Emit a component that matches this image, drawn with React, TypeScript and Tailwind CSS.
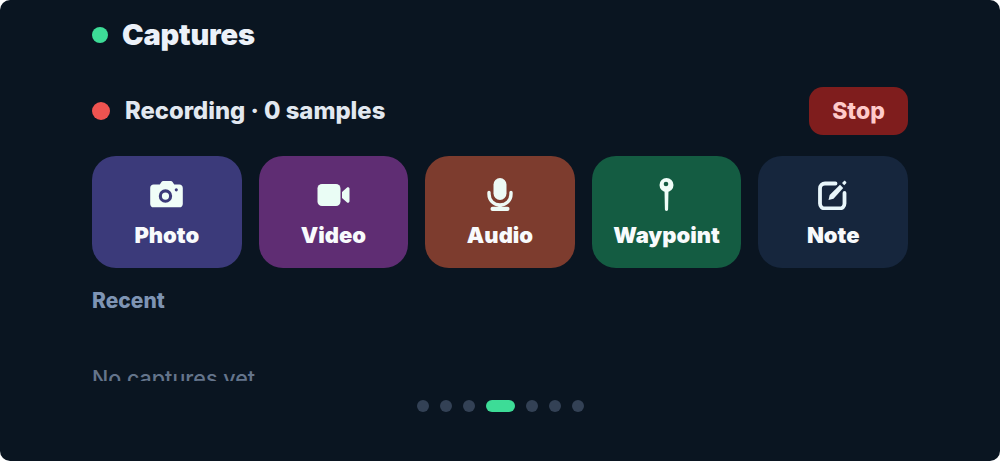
import React from "react";

const CameraIcon = ({ hole }: { hole: string }) => (
	<svg width="33" height="27" viewBox="0 0 32 26">
		<path
			d="M3.5 3.5h6l1.6-2.4c.4-.6 1-.9 1.700-.9h7.400c.7 0 1.300.3 1.700.9l1.600 2.400h5c1.900 0 3.300 1.400 3.300 3.300v15.500c0 1.900-1.400 3.300-3.300 3.300h-25c-1.900 0-3.300-1.400-3.300-3.300V6.800c0-1.900 1.400-3.300 3.300-3.300z"
			fill="#f0fdf8"
			transform="translate(0 -0.2)"
		/>
		<circle cx="15" cy="14.500" r="5" fill="none" stroke={hole} strokeWidth="3" />
		<circle cx="25.500" cy="8.500" r="1.500" fill={hole} />
	</svg>
);

const VideoIcon = () => (
	<svg width="33" height="22" viewBox="0 0 32 22">
		<rect x="0" y="0" width="23" height="22" rx="4.500" fill="#eafdf5" />
		<path d="M24.500 8l4.800-4.200c1-1 2.700-.4 2.700 1v12.400c0 1.400-1.700 2-2.700 1L24.500 14z" fill="#eafdf5" />
	</svg>
);

const MicIcon = () => (
	<svg width="26" height="33" viewBox="0 0 26 33">
		<rect x="6.500" y="0" width="13" height="22" rx="6.500" fill="#edfaf5" />
		<path d="M2 14.500v1.500c0 6.300 4.700 11 11 11s11-4.700 11-11v-1.500" fill="none" stroke="#edfaf5" strokeWidth="3.400" strokeLinecap="round" />
		<path d="M13 26v5" stroke="#edfaf5" strokeWidth="3.400" />
		<rect x="3.500" y="28.800" width="19" height="4.200" rx="2" fill="#edfaf5" />
	</svg>
);

const PinIcon = ({ hole }: { hole: string }) => (
	<svg width="15" height="33" viewBox="0 0 15 33">
		<path d="M5.500 12h4l-.4 19.300c0 1-.7 1.700-1.600 1.700s-1.600-.7-1.600-1.700z" fill="#f0fdf8" />
		<circle cx="7.500" cy="7" r="7" fill="#f0fdf8" />
		<circle cx="7" cy="6" r="2.300" fill={hole} />
	</svg>
);

const NoteIcon = () => (
	<svg width="30" height="31" viewBox="0 0 30 31">
		<path
			d="M17.500 4.500H7a5 5 0 0 0-5 5v15a5 5 0 0 0 5 5h14.500a5 5 0 0 0 5-5V14"
			fill="none"
			stroke="#e8f6fb"
			strokeWidth="3.800"
			strokeLinecap="round"
		/>
		<path d="M10.500 21l1.200-5L22 5.800l3.200 3.200L15.500 19.800z" fill="#e8f6fb" />
		<path d="M24 4l1.800-1.800c.5-.5 1.200-.5 1.600 0l.6.600c.5.500.5 1.200 0 1.600L26.200 6.300z" fill="#e8f6fb" />
	</svg>
);

const tiles = [
	{ label: "Photo", bg: "bg-[#3b3a7a]", icon: <CameraIcon hole="#3b3a7a" /> },
	{ label: "Video", bg: "bg-[#5f2d73]", icon: <VideoIcon /> },
	{ label: "Audio", bg: "bg-[#7d3c2e]", icon: <MicIcon /> },
	{ label: "Waypoint", bg: "bg-[#145c42]", icon: <PinIcon hole="#145c42" /> },
	{ label: "Note", bg: "bg-[#16263d]", icon: <NoteIcon /> },
];

export default function App() {
	return (
		<div className="h-[461px] w-[1000px] overflow-hidden bg-white font-['Inter',sans-serif]">
			<div className="flex h-full flex-col rounded-[10px] bg-[#0a1521] px-[92px]">
				<div className="flex h-[70px] shrink-0 items-center gap-[14px]">
					<div className="h-[16px] w-[16px] rounded-full bg-[#3ddc97]" />
					<h1 className="text-[29px] font-black tracking-[-0.2px] text-[#ecf1f9]">Captures</h1>
				</div>
				<div className="mt-[17px] flex h-[48px] shrink-0 items-center justify-between">
					<div className="flex items-center gap-[15px]">
						<div className="h-[18px] w-[18px] rounded-full bg-[#ef5350]" />
						<span className="text-[23.8px] font-extrabold text-[#e2e8f0]">Recording · 0 samples</span>
					</div>
					<button className="h-[48px] w-[99px] rounded-[14px] bg-[#7f1d1d] text-[23px] font-extrabold text-[#fecaca]">
						Stop
					</button>
				</div>
				<div className="mt-[21px] grid h-[112px] shrink-0 grid-cols-5 gap-[17px]">
					{tiles.map((t) => (
						<div key={t.label} className={`flex flex-col items-center rounded-[24px] ${t.bg}`}>
							<div className="mt-[22px] flex h-[33px] items-center justify-center">{t.icon}</div>
							<span className="mt-[9px] text-[22px] leading-[30px] font-black text-[#f8fafc]">{t.label}</span>
						</div>
					))}
				</div>
				<div className="mt-[20px] text-[21px] leading-[26px] font-extrabold text-[#7e94b4]">Recent</div>
				<div className="mt-[49px] h-[18px] shrink-0 overflow-hidden">
					<div className="text-[21.5px] leading-[30px] font-medium text-[#64748b]">No captures yet</div>
				</div>
				<div className="mt-[19px] flex items-center justify-center gap-[11px]">
					{[0, 1, 2, 3, 4, 5, 6].map((i) =>
						i === 3 ? (
							<div key={i} className="h-[12px] w-[29px] rounded-full bg-[#3ddc97]" />
						) : (
							<div key={i} className="h-[12px] w-[12px] rounded-full bg-[#334155]" />
						)
					)}
				</div>
			</div>
		</div>
	);
}
